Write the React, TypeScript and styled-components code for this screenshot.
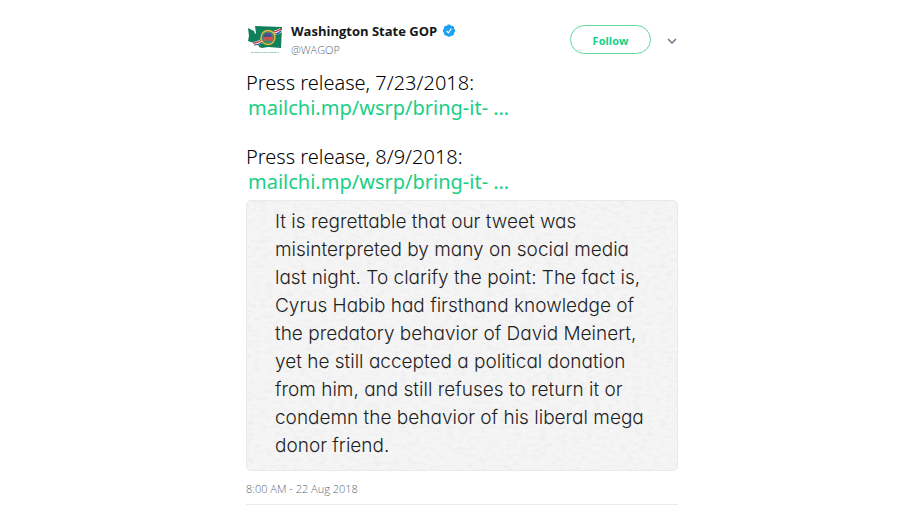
import React from "react";
import styled, { createGlobalStyle } from "styled-components";

const GlobalStyle = createGlobalStyle`
  * { box-sizing: border-box; }
  body {
    margin: 0;
    background: #fff;
    color: #14171a;
    font-family: "Noto Sans", "Open Sans", sans-serif;
  }
`;

const Tweet = styled.article`
  max-width: 432px;
  margin: 0 auto;
  padding-top: 22px;
  border-bottom: 1px solid #e6ecf0;
`;

const Header = styled.header`
  display: flex;
  align-items: flex-start;
`;

const Avatar = styled.svg`
  width: 37px;
  height: 34px;
  flex: none;
  margin-right: 8px;
`;

const Author = styled.div`
  flex: 1;
  min-width: 0;
`;

const NameRow = styled.div`
  display: flex;
  align-items: center;
  gap: 5px;
`;

const Name = styled.a`
  color: #14171a;
  font-family: "Open Sans", sans-serif;
  font-size: 13px;
  font-weight: 700;
  line-height: 18px;
  text-decoration: none;
`;

const Badge = styled.svg`
  width: 14px;
  height: 14px;
`;

const Handle = styled.a`
  display: block;
  color: #566877;
  font-family: "Open Sans", sans-serif;
  font-size: 11px;
  font-weight: 300;
  line-height: 19px;
  text-decoration: none;
`;

const Actions = styled.div`
  display: flex;
  align-items: center;
  gap: 14px;
  padding-top: 3px;
`;

const FollowButton = styled.button`
  width: 81px;
  height: 29px;
  padding: 2px 0 0;
  border: 1px solid #62d99c;
  border-radius: 15px;
  background: #fff;
  color: #19cf86;
  font-family: "Open Sans", sans-serif;
  font-size: 11px;
  font-weight: 700;
  cursor: pointer;
`;

const MenuButton = styled.button`
  display: flex;
  padding: 4px 1px 0 2px;
  border: 0;
  background: none;
  cursor: pointer;
`;

const Chevron = styled.svg`
  width: 10px;
  height: 7px;
`;

const Body = styled.div`
  display: grid;
  gap: 24px;
  margin-top: 11px;
  font-size: 20px;
  line-height: 25px;
`;

const Release = styled.p`
  margin: 0;
  color: #000;
  font-weight: 300;
`;

const ReleaseLink = styled.a`
  display: block;
  padding-left: 2px;
  color: #19cf86;
  font-weight: 400;
  text-decoration: none;
`;

const Note = styled.figure`
  position: relative;
  margin: 6px 0 0;
  padding: 7px 24px 10px 28px;
  border: 1px solid #e8eaec;
  border-radius: 5px;
  overflow: hidden;
  background: #f5f5f5;
`;

const Paper = styled.svg`
  position: absolute;
  inset: 0;
  width: 100%;
  height: 100%;
`;

const NoteText = styled.p`
  position: relative;
  margin: 0;
  color: #1f1f1f;
  font-family: "Inter", sans-serif;
  font-size: 19px;
  font-weight: 300;
  font-feature-settings: "cv11";
  line-height: 28px;
  white-space: pre-line;
`;

const Time = styled.time`
  display: block;
  padding: 9px 0 6px;
  color: #566877;
  font-family: "Open Sans", sans-serif;
  font-size: 11px;
  font-weight: 300;
  line-height: 18px;
`;

const releases = [
  { date: "7/23/2018", link: "mailchi.mp/wsrp/bring-it- …" },
  { date: "8/9/2018", link: "mailchi.mp/wsrp/bring-it- …" },
];

const statement = `It is regrettable that our tweet was
misinterpreted by many on social media
last night. To clarify the point: The fact is,
Cyrus Habib had firsthand knowledge of
the predatory behavior of David Meinert,
yet he still accepted a political donation
from him, and still refuses to return it or
condemn the behavior of his liberal mega
donor friend.`;

const StateLogo = () => (
  <Avatar viewBox="0 0 37 34" role="img" aria-label="Washington State GOP logo">
    <path d="M2 6l6 3 1 3 1-1-1-7 27 1-1 21-13-1-6 1-3-1-1-3-7-2-3-1 1-5z" fill="#0f7f5c" />
    <path d="M7 22c4 0 6-1 9-3M27 11c2 0 5-1 8-3" fill="none" stroke="#fff" strokeWidth="4" />
    <path d="M7 21c4 0 6-1 9-3M27 10c2 0 5-1 8-3" fill="none" stroke="#cf3341" strokeWidth="1.5" />
    <path d="M8 23c4 0 6-1 9-3M28 12c2 0 5-1 7-3" fill="none" stroke="#294f91" strokeWidth="1.2" />
    <circle cx="22" cy="15.500" r="7" fill="#3d8a72" stroke="#e4b932" strokeWidth="1.400" />
    <path d="M17.500 15q0-4 4.500-4t4.500 4v4h-1v-3l-1 3h-2v-2h-2v2h-2z" fill="#e34a4a" />
    <path d="M17.500 15q0-4 4.500-4 3 0 4 2l-1 2z" fill="#3c5593" />
    <path d="M5 30.500h28" stroke="#8fcdb6" strokeWidth="1.200" strokeDasharray="2 .5 1 .6 3 .5" />
  </Avatar>
);

const VerifiedBadge = () => (
  <Badge viewBox="0 0 24 24" role="img" aria-label="Verified account">
    <path
      d="M12 1c1.500 0 2.800.8 3.500 2 1.400-.4 2.900-.1 4 1s1.400 2.600 1 4c1.200.7 2 2 2 3.500s-.8 2.800-2 3.500c.4 1.400.1 2.900-1 4s-2.600 1.400-4 1c-.7 1.200-2 2-3.500 2s-2.800-.8-3.500-2c-1.400.4-2.900.1-4-1s-1.400-2.600-1-4c-1.200-.7-2-2-2-3.500S2.300 8.700 3.500 8c-.4-1.400-.1-2.900 1-4s2.600-1.400 4-1C9.200 1.800 10.500 1 12 1z"
      fill="#1da1f2"
    />
    <path d="M8 12l3 3 5-7" fill="none" stroke="#fff" strokeWidth="2" />
  </Badge>
);

const PaperGrain = () => (
  <Paper aria-hidden="true">
    <filter id="grain" x="0" y="0" width="100%" height="100%" colorInterpolationFilters="sRGB">
      <feTurbulence type="fractalNoise" baseFrequency="0.15 0.28" numOctaves="3" seed="6" />
      <feColorMatrix values="0 0 0 0 0.3  0 0 0 0 0.3  0 0 0 0 0.3  0.1 0 0 0 -0.042" />
    </filter>
    <rect width="100%" height="100%" filter="url(#grain)" />
  </Paper>
);

export default function App() {
  return (
    <>
      <GlobalStyle />
      <Tweet>
        <Header>
          <StateLogo />
          <Author>
            <NameRow>
              <Name href="#profile">Washington State GOP</Name>
              <VerifiedBadge />
            </NameRow>
            <Handle href="#profile">@WAGOP</Handle>
          </Author>
          <Actions>
            <FollowButton type="button">Follow</FollowButton>
            <MenuButton type="button" aria-label="More options">
              <Chevron viewBox="0 0 10 7">
                <path d="M1 1l4 4 4-4" fill="none" stroke="#657786" strokeWidth="1.500" />
              </Chevron>
            </MenuButton>
          </Actions>
        </Header>
        <Body>
          {releases.map(({ date, link }) => (
            <Release key={date}>
              Press release, {date}:
              <ReleaseLink href="#release">{link}</ReleaseLink>
            </Release>
          ))}
        </Body>
        <Note>
          <PaperGrain />
          <NoteText>{statement}</NoteText>
        </Note>
        <Time dateTime="2018-08-22T08:00">8:00 AM - 22 Aug 2018</Time>
      </Tweet>
    </>
  );
}
